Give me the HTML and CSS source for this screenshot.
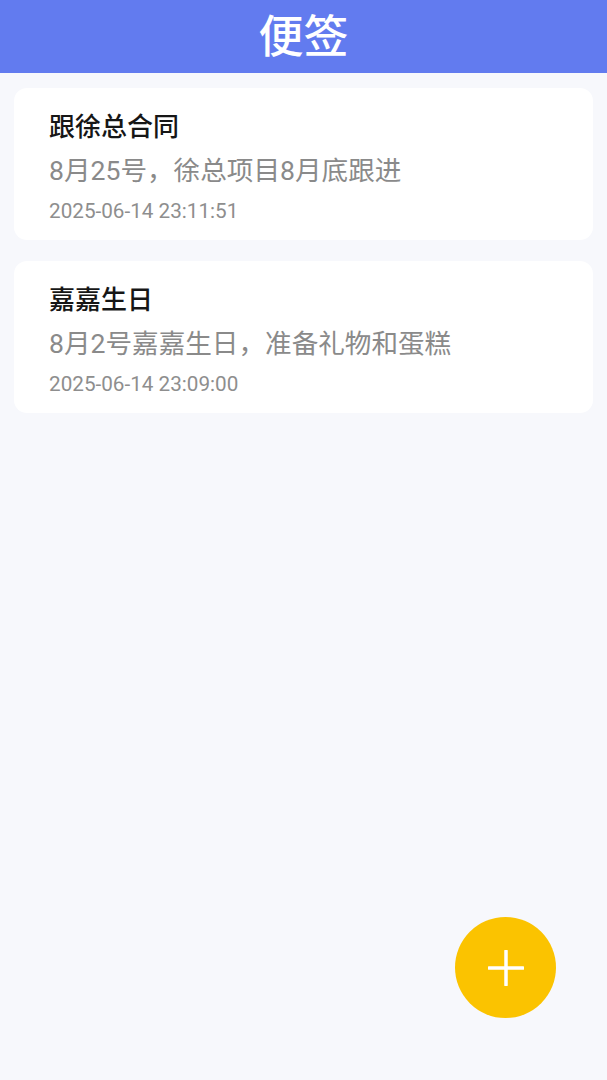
FILE: index.html
```html
<!DOCTYPE html>
<html lang="zh-CN">
<head>
<meta charset="utf-8">
<title>便签</title>
<link rel="stylesheet" href="styles.css">
</head>
<body>
<header class="app-bar"><h1 class="app-title">便签</h1></header>
<main class="note-list">
  <article class="note-card">
    <h2 class="note-title">跟徐总合同</h2>
    <p class="note-desc">8月25号，徐总项目8月底跟进</p>
    <p class="note-date">2025-06-14 23:11:51</p>
  </article>
  <article class="note-card">
    <h2 class="note-title">嘉嘉生日</h2>
    <p class="note-desc">8月2号嘉嘉生日，准备礼物和蛋糕</p>
    <p class="note-date">2025-06-14 23:09:00</p>
  </article>
</main>
<button class="fab" aria-label="新建">
  <svg width="36" height="36" viewBox="0 0 36 36"><path d="M18 1V35M1 18H35" stroke="#fff" stroke-width="3.5" stroke-linecap="round" fill="none"/></svg>
</button>
</body>
</html>
```
FILE: styles.css
```css
html, body {
  margin: 0;
  padding: 0;
}
body {
  background: #f7f8fc;
  font-family: Roboto, "Noto Sans CJK SC", sans-serif;
  width: 607px;
  height: 1080px;
  overflow: hidden;
}
.app-bar {
  height: 73px;
  background: #627bef;
  display: flex;
  align-items: center;
  justify-content: center;
}
.app-title {
  margin: 0;
  color: #fff;
  font-family: "Noto Sans CJK SC", sans-serif;
  font-size: 45px;
  font-weight: 500;
  line-height: 60px;
  margin-top: -6px;
}
.note-list {
  padding: 15px 14px 0;
  display: flex;
  flex-direction: column;
  gap: 21px;
}
.note-card {
  background: #fff;
  border-radius: 13px;
  padding: 20px 35px 16px;
}
.note-title {
  margin: 0;
  font-family: "Noto Sans CJK SC", sans-serif;
  font-size: 26px;
  font-weight: 500;
  line-height: 34px;
  color: #161616;
}
.note-desc {
  margin: 11px 0 0;
  font-size: 26.6px;
  line-height: 35px;
  color: #8a8a8a;
}
.note-date {
  margin: 10px 0 0;
  font-size: 20.7px;
  line-height: 26px;
  color: #8e8e8e;
}
.fab {
  position: fixed;
  right: 51px;
  bottom: 62px;
  width: 101px;
  height: 101px;
  border-radius: 50%;
  border: none;
  padding: 0;
  background: #fbc300;
  display: flex;
  align-items: center;
  justify-content: center;
}
```
